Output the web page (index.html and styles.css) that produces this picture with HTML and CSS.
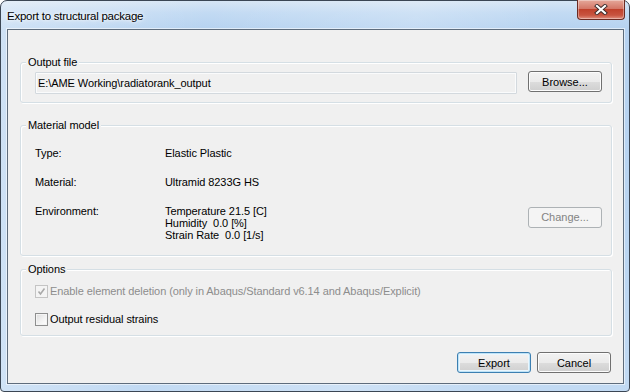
FILE: index.html
```html
<!DOCTYPE html>
<html>
  <head>
    <title>Export to structural package</title>
    <meta charset="utf-8">
    <link rel="stylesheet" href="styles.css">
  </head>
  <body>
    <div class="window">
      <div class="titlebar">
        <span class="title">Export to structural package</span>
        <span class="close">
          <svg viewBox="0 0 14 11" width="14" height="11">
            <path d="M3 2 L11 9 M11 2 L3 9" stroke="#3a2a2a" stroke-width="4" stroke-linecap="square" fill="none" />
            <path d="M3 2 L11 9 M11 2 L3 9" stroke="#fff" stroke-width="2.2" stroke-linecap="square" fill="none" />
          </svg>
        </span>
      </div>
      <div class="client">
        <fieldset class="group output">
          <legend>Output file</legend>
          <div class="file-row">
            <div class="path">E:\AME Working\radiatorank_output</div>
            <button class="btn">Browse...</button>
          </div>
        </fieldset>
        <fieldset class="group material">
          <legend>Material model</legend>
          <div class="prop"><span class="key">Type:</span><span class="val">Elastic Plastic</span></div>
          <div class="prop"><span class="key">Material:</span><span class="val">Ultramid 8233G HS</span></div>
          <div class="prop env">
            <span class="key">Environment:</span>
            <span class="val">Temperature 21.5 [C]<br>Humidity&nbsp; 0.0 [%]<br>Strain Rate&nbsp; 0.0 [1/s]</span>
            <button class="btn change" disabled>Change...</button>
          </div>
        </fieldset>
        <fieldset class="group options">
          <legend>Options</legend>
          <label class="check disabled">
            <span class="box">
              <svg viewBox="0 0 9 9" width="9" height="9"><path d="M1.5 4.5 L3.5 7 L7.5 1.5" stroke="#a9a9a9" stroke-width="1.6" fill="none" /></svg>
            </span>
            Enable element deletion (only in Abaqus/Standard v6.14 and Abaqus/Explicit)
          </label>
          <label class="check">
            <span class="box"></span>
            Output residual strains
          </label>
        </fieldset>
        <div class="actions">
          <button class="btn default">Export</button>
          <button class="btn">Cancel</button>
        </div>
      </div>
    </div>
  </body>
</html>
```

FILE: styles.css
```css
html {height:100%;}
body {margin:0; height:100%; font-family:"Liberation Sans", Arial, sans-serif; font-size:11px; letter-spacing:-0.08px; color:#000; background:#fff;}

.window {box-sizing:border-box; width:630px; height:392px; display:flex; flex-direction:column; border:1px solid #3b4654; border-radius:7px 7px 4px 4px; background:linear-gradient(100deg, rgba(255,255,255,.35) 0, rgba(255,255,255,0) 30%, rgba(255,255,255,.2) 60%, rgba(255,255,255,0) 80%), linear-gradient(to bottom, #d6e5f4 0, #c2daf3 12px, #b6d2f0 28px, #bad5f1 60%, #c2daf3 100%);}
.titlebar {height:28px; display:flex; align-items:flex-start; padding-left:6px;}
.title {font-size:11.5px; line-height:14px; margin-top:8px; text-shadow:0 0 6px #fff, 0 0 3px #fff; letter-spacing:-0.25px;}
.close {margin-left:auto; margin-right:4px; margin-top:-1px; width:46px; height:19px; display:flex; align-items:center; justify-content:center; border:1px solid #6b2a22; border-top:0; border-radius:0 0 4px 4px; background:linear-gradient(to bottom, #e5a89a 0, #d47767 45%, #c0412c 50%, #c85440 80%, #e09080 100%); box-shadow:inset 0 0 0 1px rgba(255,255,255,.35);}

.client {flex:1; display:flex; flex-direction:column; margin:0 5px 7px 6px; background:#f0f0f0; border:1px solid #5e6c7c; box-shadow:0 0 0 1px rgba(255,255,255,.55); padding:0 11px 0 12px;}

.group {margin:0; padding:0 9px 0 14px; border:1px solid #d5dfe5; border-radius:3px; box-shadow:inset 1px 1px 0 #fff, 1px 1px 0 #fff; min-width:0;}
.group legend {padding:0 2px; margin-left:-9px; line-height:14px; background:#f0f0f0;}

.output {margin-top:25px; padding-bottom:8px;}
.file-row {display:flex; align-items:flex-start; gap:11px; margin-top:3px;}
.path {flex:1; height:20px; line-height:20px; padding:0 2px; border:1px solid #d3d9de; box-shadow:inset 0 0 0 1px #fafbfc; border-radius:1px;}

.btn {font:inherit; width:74px; height:21px; padding:0; color:#000; border:1px solid #707070; border-radius:3px; background:linear-gradient(to bottom, #f2f2f2 0, #ebebeb 50%, #dddddd 50%, #cfcfcf 100%); box-shadow:inset 0 0 0 1px #fcfcfc;}
.file-row .btn {margin-top:-1px;}
.btn.default {border-color:#3c7fb1; box-shadow:inset 0 0 0 1px #bfe3f7, inset 0 0 0 2px #eaf6fd;}
.btn.change {color:#838383; border-color:#adb2b5; background:#f4f4f4; box-shadow:none; margin-top:2px;}

.material {margin-top:15px; padding-top:15px; padding-bottom:14px;}
.prop {display:flex; align-items:flex-start; line-height:13px; margin-bottom:16px;}
.prop .key {width:130px;}
.prop.env {margin-bottom:0;}
.env .val {line-height:12px;}
.env .btn {margin-left:auto;}

.options {margin-top:6px; padding-top:7px; padding-bottom:8px;}
.check {display:flex; align-items:center; gap:2px; height:16px; margin-bottom:12px;}
.check:last-child {margin-bottom:0;}
.check.disabled {color:#8d8d8d;}
.box {box-sizing:border-box; width:13px; height:13px; display:flex; align-items:center; justify-content:center; border:1px solid #8e8f8f; background:linear-gradient(135deg, #dcdcdc 0, #f4f4f4 60%, #fff 100%); box-shadow:inset 0 0 0 1px #f4f4f4;}
.disabled .box {border-color:#c4c4c4; background:#f4f4f4;}

.actions {display:flex; justify-content:flex-end; gap:6px; margin-top:16px; margin-right:1px;}
```
